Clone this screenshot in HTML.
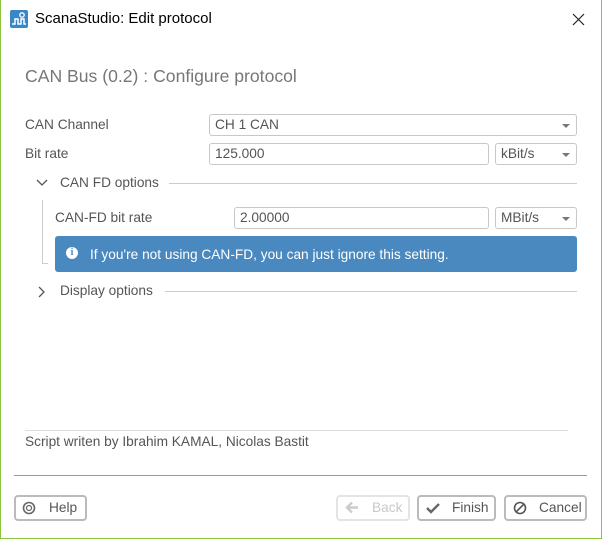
<!DOCTYPE html>
<html><head><style>
*{margin:0;padding:0;box-sizing:border-box}
body{width:602px;height:539px;background:#fff;font-family:"Liberation Sans",sans-serif;font-size:13.7px;color:#555;position:relative;overflow:hidden}
.frame{position:absolute;left:0;top:0;width:602px;height:539px;border:1px solid #8cc63f;border-top:none}
.a{position:absolute}
.box{position:absolute;border:1px solid #c8c8c8;border-radius:3px;background:#fff;padding-left:5px;line-height:20px;color:#555}
.arr{position:absolute;right:6px;top:9px;width:0;height:0;border-left:4px solid transparent;border-right:4px solid transparent;border-top:4px solid #777}
.line{position:absolute;height:1px;background:#ccc}
.btn{position:absolute;top:495px;height:26px;border:2px solid #bbb;border-radius:4px;line-height:22px;color:#555;font-size:13.7px}
</style></head><body>
<div class="frame"></div>
<svg class="a" style="left:10px;top:10px" width="18" height="18" viewBox="0 0 18 18"><rect width="18" height="18" rx="2" fill="#3a87c8"/><path d="M2 14h3v-5h3v5h3v-5h3v5h2" stroke="#fff" stroke-width="1.5" fill="none"/><circle cx="12" cy="5" r="2.2" stroke="#fff" stroke-width="1.3" fill="none"/></svg>
<div class="a" style="left:35px;top:10px;font-size:15px;color:#000">ScanaStudio: Edit protocol</div>
<svg class="a" style="left:572px;top:13px" width="13" height="13"><path d="M1 1L12 12M12 1L1 12" stroke="#222" stroke-width="1.2"/></svg>
<div class="a" style="left:25px;top:66px;font-size:17.6px;color:#777">CAN Bus (0.2) : Configure protocol</div>

<div class="a" style="left:25px;top:117px">CAN Channel</div>
<div class="box" style="left:209px;top:114px;width:368px;height:22px">CH 1 CAN<div class="arr"></div></div>
<div class="a" style="left:25px;top:146px">Bit rate</div>
<div class="box" style="left:209px;top:143px;width:280px;height:22px">125.000</div>
<div class="box" style="left:495px;top:143px;width:82px;height:22px">kBit/s<div class="arr"></div></div>

<svg class="a" style="left:36px;top:179px" width="12" height="8"><path d="M1 1l5 5 5-5" stroke="#555" stroke-width="1.3" fill="none"/></svg>
<div class="a" style="left:60px;top:175px">CAN FD options</div>
<div class="line" style="left:169px;top:183px;width:408px"></div>
<div class="a" style="left:42px;top:200px;width:1px;height:64px;background:#ccc"></div>
<div class="a" style="left:42px;top:263px;width:6px;height:1px;background:#ccc"></div>
<div class="a" style="left:55px;top:210px">CAN-FD bit rate</div>
<div class="box" style="left:234px;top:207px;width:255px;height:22px">2.00000</div>
<div class="box" style="left:495px;top:207px;width:82px;height:22px">MBit/s<div class="arr"></div></div>
<div class="a" style="left:55px;top:236px;width:522px;height:36px;background:#4a88c0;border-radius:3px;color:#fff;line-height:37px;padding-left:35px">If you're not using CAN-FD, you can just ignore this setting.</div>
<div class="a" style="left:66px;top:247px;width:12px;height:12px;border-radius:6px;background:#fff;color:#4a88c0;font-size:10px;font-weight:bold;text-align:center;line-height:12px;font-family:'Liberation Serif',serif">i</div>

<svg class="a" style="left:38px;top:286px" width="8" height="12"><path d="M1 1l5 5-5 5" stroke="#555" stroke-width="1.3" fill="none"/></svg>
<div class="a" style="left:60px;top:283px">Display options</div>
<div class="line" style="left:165px;top:291px;width:412px"></div>

<div class="line" style="left:25px;top:430px;width:543px;background:#ddd"></div>
<div class="a" style="left:25px;top:434px">Script writen by Ibrahim KAMAL, Nicolas Bastit</div>
<div class="line" style="left:14px;top:475px;width:573px;background:#999"></div>

<div class="btn" style="left:14px;width:73px;padding-left:33px">Help</div>
<svg class="a" style="left:22px;top:501px" width="14" height="14"><circle cx="7" cy="7" r="5.5" stroke="#666" stroke-width="1.6" fill="none"/><circle cx="7" cy="7" r="2.5" stroke="#666" stroke-width="1.2" fill="none"/></svg>
<div class="btn" style="left:336px;width:74px;padding-left:34px;border-color:#e4e4e4;color:#c8c8c8">Back</div>
<svg class="a" style="left:345px;top:501px" width="14" height="13"><path d="M13 6.5H3M7 1.5L2 6.5l5 5" stroke="#ccc" stroke-width="2.4" fill="none"/></svg>
<div class="btn" style="left:417px;width:79px;padding-left:33px">Finish</div>
<svg class="a" style="left:426px;top:502px" width="14" height="12"><path d="M1 6l4 4 8-8" stroke="#666" stroke-width="2.4" fill="none"/></svg>
<div class="btn" style="left:504px;width:83px;padding-left:33px">Cancel</div>
<svg class="a" style="left:513px;top:501px" width="14" height="14"><circle cx="7" cy="7" r="5.5" stroke="#555" stroke-width="1.6" fill="none"/><path d="M3.5 10.5l7-7" stroke="#555" stroke-width="1.6"/></svg>
</body></html>
